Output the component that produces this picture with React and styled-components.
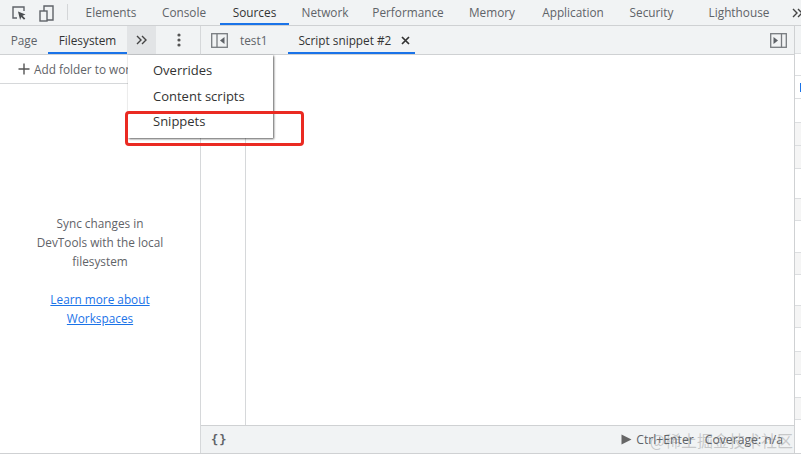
import React from 'react';
import styled, { createGlobalStyle } from 'styled-components';

const Global = createGlobalStyle`
  html, body { margin: 0; padding: 0; background: #fff; overflow: hidden; }
  #root { width: 801px; height: 455px; }
`;

const Page = styled.div`
  width: 801px;
  height: 455px;
  display: flex;
  flex-direction: column;
  position: relative;
  overflow: hidden;
  background: #fff;
  font-family: "Open Sans", "Noto Sans", sans-serif;
  font-size: 11.8px;
  color: #5f6368;
`;

const TopBar = styled.div`
  height: 25px;
  flex: none;
  display: flex;
  align-items: stretch;
  background: #f1f3f4;
  border-bottom: 1px solid #cfd1d3;
`;

const IconSlot = styled.div`
  width: ${p => p.$w}px;
  flex: none;
  display: flex;
  align-items: center;
  justify-content: center;
`;

const Divider = styled.div`
  width: 1px;
  height: 16px;
  flex: none;
  margin: 4px 6px 0 10px;
  background: #d4d6d8;
`;

const MainTab = styled.div`
  width: ${p => p.$w}px;
  flex: none;
  text-align: center;
  line-height: 24px;
  color: ${p => (p.$active ? '#333' : '#5f6368')};
  box-shadow: ${p => (p.$active ? 'inset 0 -2px 0 #1a73e8' : 'none')};
`;

const Body = styled.div`
  height: 427px;
  flex: none;
  display: flex;
  border-bottom: 1px solid #cfd1d3;
`;

const Navigator = styled.div`
  width: 200px;
  flex: none;
  display: flex;
  flex-direction: column;
  border-right: 1px solid #d6d8da;
`;

const SubBar = styled.div`
  height: 28px;
  flex: none;
  display: flex;
  align-items: stretch;
  background: #f1f3f4;
  border-bottom: 1px solid #cfd1d3;
`;

const SubTab = styled.div`
  width: ${p => p.$w}px;
  flex: none;
  text-align: center;
  line-height: 28px;
  color: ${p => (p.$active ? '#333' : '#5f6368')};
  box-shadow: ${p => (p.$active ? 'inset 0 -2px 0 #1a73e8' : 'none')};
`;

const MoreButton = styled.div`
  width: 29px;
  flex: none;
  display: flex;
  align-items: center;
  justify-content: center;
  background: #e2e4e6;
`;

const MenuDots = styled.div`
  margin-left: auto;
  width: 43px;
  display: flex;
  align-items: center;
  justify-content: center;
`;

const AddFolder = styled.div`
  height: 28px;
  flex: none;
  display: flex;
  align-items: center;
  gap: 4px;
  padding-left: 18px;
  border-bottom: 1px solid #d6d8da;
  white-space: nowrap;
  overflow: hidden;
`;

const Empty = styled.div`
  flex: 1;
  display: flex;
  flex-direction: column;
  align-items: center;
  padding-top: 130px;
  text-align: center;
  line-height: 19px;
`;

const Paragraph = styled.div`
  width: 132px;
  margin-bottom: 19px;
`;

const DocLink = styled.a`
  width: 132px;
  color: #1a73e8;
  text-decoration: underline;
`;

const Editor = styled.div`
  flex: 1;
  display: flex;
  flex-direction: column;
  min-width: 0;
`;

const TabRow = styled.div`
  height: 28px;
  flex: none;
  display: flex;
  align-items: stretch;
  background: #f1f3f4;
  border-bottom: 1px solid #cfd1d3;
`;

const PaneToggle = styled.div`
  width: ${p => p.$w}px;
  flex: none;
  display: flex;
  align-items: center;
  justify-content: center;
  margin-left: ${p => (p.$end ? 'auto' : '0')};
`;

const FileTab = styled.div`
  flex: none;
  display: flex;
  align-items: center;
  gap: 10px;
  margin-left: ${p => p.$gap}px;
  padding: 0 ${p => p.$padRight}px 0 ${p => p.$padLeft}px;
  color: ${p => (p.$active ? '#333' : '#5f6368')};
  box-shadow: ${p => (p.$active ? 'inset 0 -2px 0 #1a73e8' : 'none')};
`;

const Code = styled.div`
  flex: 1;
  display: flex;
`;

const Gutter = styled.div`
  width: 45px;
  flex: none;
  box-sizing: border-box;
  border-right: 1px solid #d6d8da;
`;

const Footer = styled.div`
  height: 27px;
  flex: none;
  display: flex;
  align-items: center;
  padding: 0 11px 0 10px;
  background: #f1f3f4;
  border-top: 1px solid #cfd1d3;
  font-size: 12.2px;
`;

const Braces = styled.span`
  font-family: "DejaVu Sans Mono", monospace;
  font-weight: 700;
  font-size: 12px;
  letter-spacing: 1px;
`;

const FooterRight = styled.div`
  margin-left: auto;
  display: flex;
  align-items: center;
  gap: 11px;
`;

const RunGroup = styled.span`
  display: flex;
  align-items: center;
  gap: 4px;
`;

const SideStrip = styled.div`
  width: 6px;
  flex: none;
  border-left: 1px solid #cfd1d3;
  display: flex;
  flex-direction: column;
`;

const StripRow = styled.div`
  height: ${p => p.$h}px;
  flex: none;
  box-sizing: border-box;
  display: flex;
  align-items: center;
  justify-content: flex-end;
  background: ${p => p.$bg || '#fff'};
  border-bottom: 1px solid #dcdee0;
`;

const StripMark = styled.div`
  width: 1px;
  height: 9px;
  background: #1a73e8;
`;

const Popup = styled.div`
  position: absolute;
  left: 128px;
  top: 55px;
  width: 145px;
  height: 83px;
  box-sizing: border-box;
  padding-top: 3px;
  background: #fff;
  font-size: 13px;
  box-shadow: 1px 1px 2px rgba(0, 0, 0, 0.6), 0 0 1px rgba(0, 0, 0, 0.2);
`;

const PopupItem = styled.div`
  height: 25.5px;
  line-height: 25px;
  padding-left: 25px;
  color: #333;
`;

const Highlight = styled.div`
  position: absolute;
  left: 125px;
  top: 111px;
  width: 179px;
  height: 35px;
  box-sizing: border-box;
  border: 3px solid #ea2a22;
  border-radius: 4px;
`;

const Watermark = styled.div`
  position: absolute;
  right: 8px;
  top: 428px;
  font-family: "Noto Sans CJK SC", sans-serif;
  font-size: 16px;
  color: rgba(120, 120, 120, 0.35);
  white-space: nowrap;
`;

const Inspect = () => (
  <svg width="18" height="18" viewBox="0 0 18 18" fill="none">
    <path d="M7 14H3V3h11v4" stroke="#5f6368" strokeWidth="1.4" />
    <path d="M8 7.5l7.5 3-3 1.2 2.8 2.8-1.3 1.2-2.7-2.8-1.2 3z" fill="#4a4d50" />
  </svg>
);

const Device = () => (
  <svg width="18" height="18" viewBox="0 0 18 18" fill="none" stroke="#5f6368" strokeWidth="1.4">
    <path d="M6 7V2h9v14H9" />
    <rect x="2" y="7" width="7" height="10" />
  </svg>
);

const Chevrons = () => (
  <svg width="11" height="10" viewBox="0 0 11 10" fill="none" stroke="#444" strokeWidth="1.4" style={{ flex: 'none' }}>
    <path d="M1 1l4 4-4 4M6 1l4 4-4 4" />
  </svg>
);

const Dots = () => (
  <svg width="4" height="14" viewBox="0 0 4 14" fill="#555">
    <circle cx="2" cy="2" r="1.6" />
    <circle cx="2" cy="7" r="1.6" />
    <circle cx="2" cy="12" r="1.6" />
  </svg>
);

const PlusIcon = () => (
  <svg width="12" height="12" viewBox="0 0 12 12" stroke="#555" strokeWidth="1.4">
    <path d="M6 0.5v11M0.5 6h11" />
  </svg>
);

const PanelLeft = () => (
  <svg width="17" height="15" viewBox="0 0 17 15" fill="none" stroke="#777b7f" strokeWidth="1.3">
    <rect x="0.7" y="0.7" width="15.6" height="13.6" />
    <path d="M6 0.7v13.6" />
    <path d="M13.5 4v7L9 7.5z" fill="#5f6368" stroke="none" />
  </svg>
);

const PanelRight = () => (
  <svg width="17" height="15" viewBox="0 0 17 15" fill="none" stroke="#777b7f" strokeWidth="1.3">
    <rect x="0.7" y="0.7" width="15.6" height="13.6" />
    <path d="M11.5 0.7v13.6" />
    <path d="M3.5 4v7L8 7.5z" fill="#5f6368" stroke="none" />
  </svg>
);

const CloseIcon = () => (
  <svg width="9" height="9" viewBox="0 0 9 9" stroke="#333" strokeWidth="1.7">
    <path d="M1 1l7 7M8 1l-7 7" />
  </svg>
);

const RunIcon = () => (
  <svg width="11" height="11" viewBox="0 0 11 11" fill="#666">
    <path d="M0.5 0.5v10l10-5z" />
  </svg>
);

const mainTabs = [
  ['Elements', 74], ['Console', 72], ['Sources', 69], ['Network', 72], ['Performance', 94],
  ['Memory', 74], ['Application', 88], ['Security', 69], ['Lighthouse', 106],
];

const shade = '#f5f5f5';
const stripRows = [
  [28, '#f1f3f4'], [22], [23, null, true], [24], [23, shade], [23, shade], [30], [22, shade],
  [32], [22, shade], [31], [22, shade], [24], [23, shade], [23], [22, shade],
];

export default function App() {
  return (
    <Page>
      <Global />
      <TopBar>
        <IconSlot $w={37}><Inspect /></IconSlot>
        <IconSlot $w={20}><Device /></IconSlot>
        <Divider />
        {mainTabs.map(([name, w]) => (
          <MainTab key={name} $w={w} $active={name === 'Sources'}>{name}</MainTab>
        ))}
        <IconSlot $w={11}><Chevrons /></IconSlot>
      </TopBar>
      <Body>
        <Navigator>
          <SubBar>
            <SubTab $w={48}>Page</SubTab>
            <SubTab $w={79} $active>Filesystem</SubTab>
            <MoreButton><Chevrons /></MoreButton>
            <MenuDots><Dots /></MenuDots>
          </SubBar>
          <AddFolder><PlusIcon />Add folder to workspace</AddFolder>
          <Empty>
            <Paragraph>Sync changes in DevTools with the local filesystem</Paragraph>
            <DocLink href="#">Learn more about Workspaces</DocLink>
          </Empty>
        </Navigator>
        <Editor>
          <TabRow>
            <PaneToggle $w={36}><PanelLeft /></PaneToggle>
            <FileTab $padLeft={3} $padRight={3} $gap={0}>test1</FileTab>
            <FileTab $padLeft={10} $padRight={5} $gap={18} $active>Script snippet #2<CloseIcon /></FileTab>
            <PaneToggle $w={32} $end><PanelRight /></PaneToggle>
          </TabRow>
          <Code><Gutter /></Code>
          <Footer>
            <Braces>{'{}'}</Braces>
            <FooterRight>
              <RunGroup><RunIcon />Ctrl+Enter</RunGroup>
              <span>Coverage: n/a</span>
            </FooterRight>
          </Footer>
        </Editor>
        <SideStrip>
          {stripRows.map(([h, bg, mark], i) => (
            <StripRow key={i} $h={h} $bg={bg}>{mark && <StripMark />}</StripRow>
          ))}
        </SideStrip>
      </Body>
      <Popup>
        <PopupItem>Overrides</PopupItem>
        <PopupItem>Content scripts</PopupItem>
        <PopupItem>Snippets</PopupItem>
      </Popup>
      <Highlight />
      <Watermark>@稀土掘金技术社区</Watermark>
    </Page>
  );
}
